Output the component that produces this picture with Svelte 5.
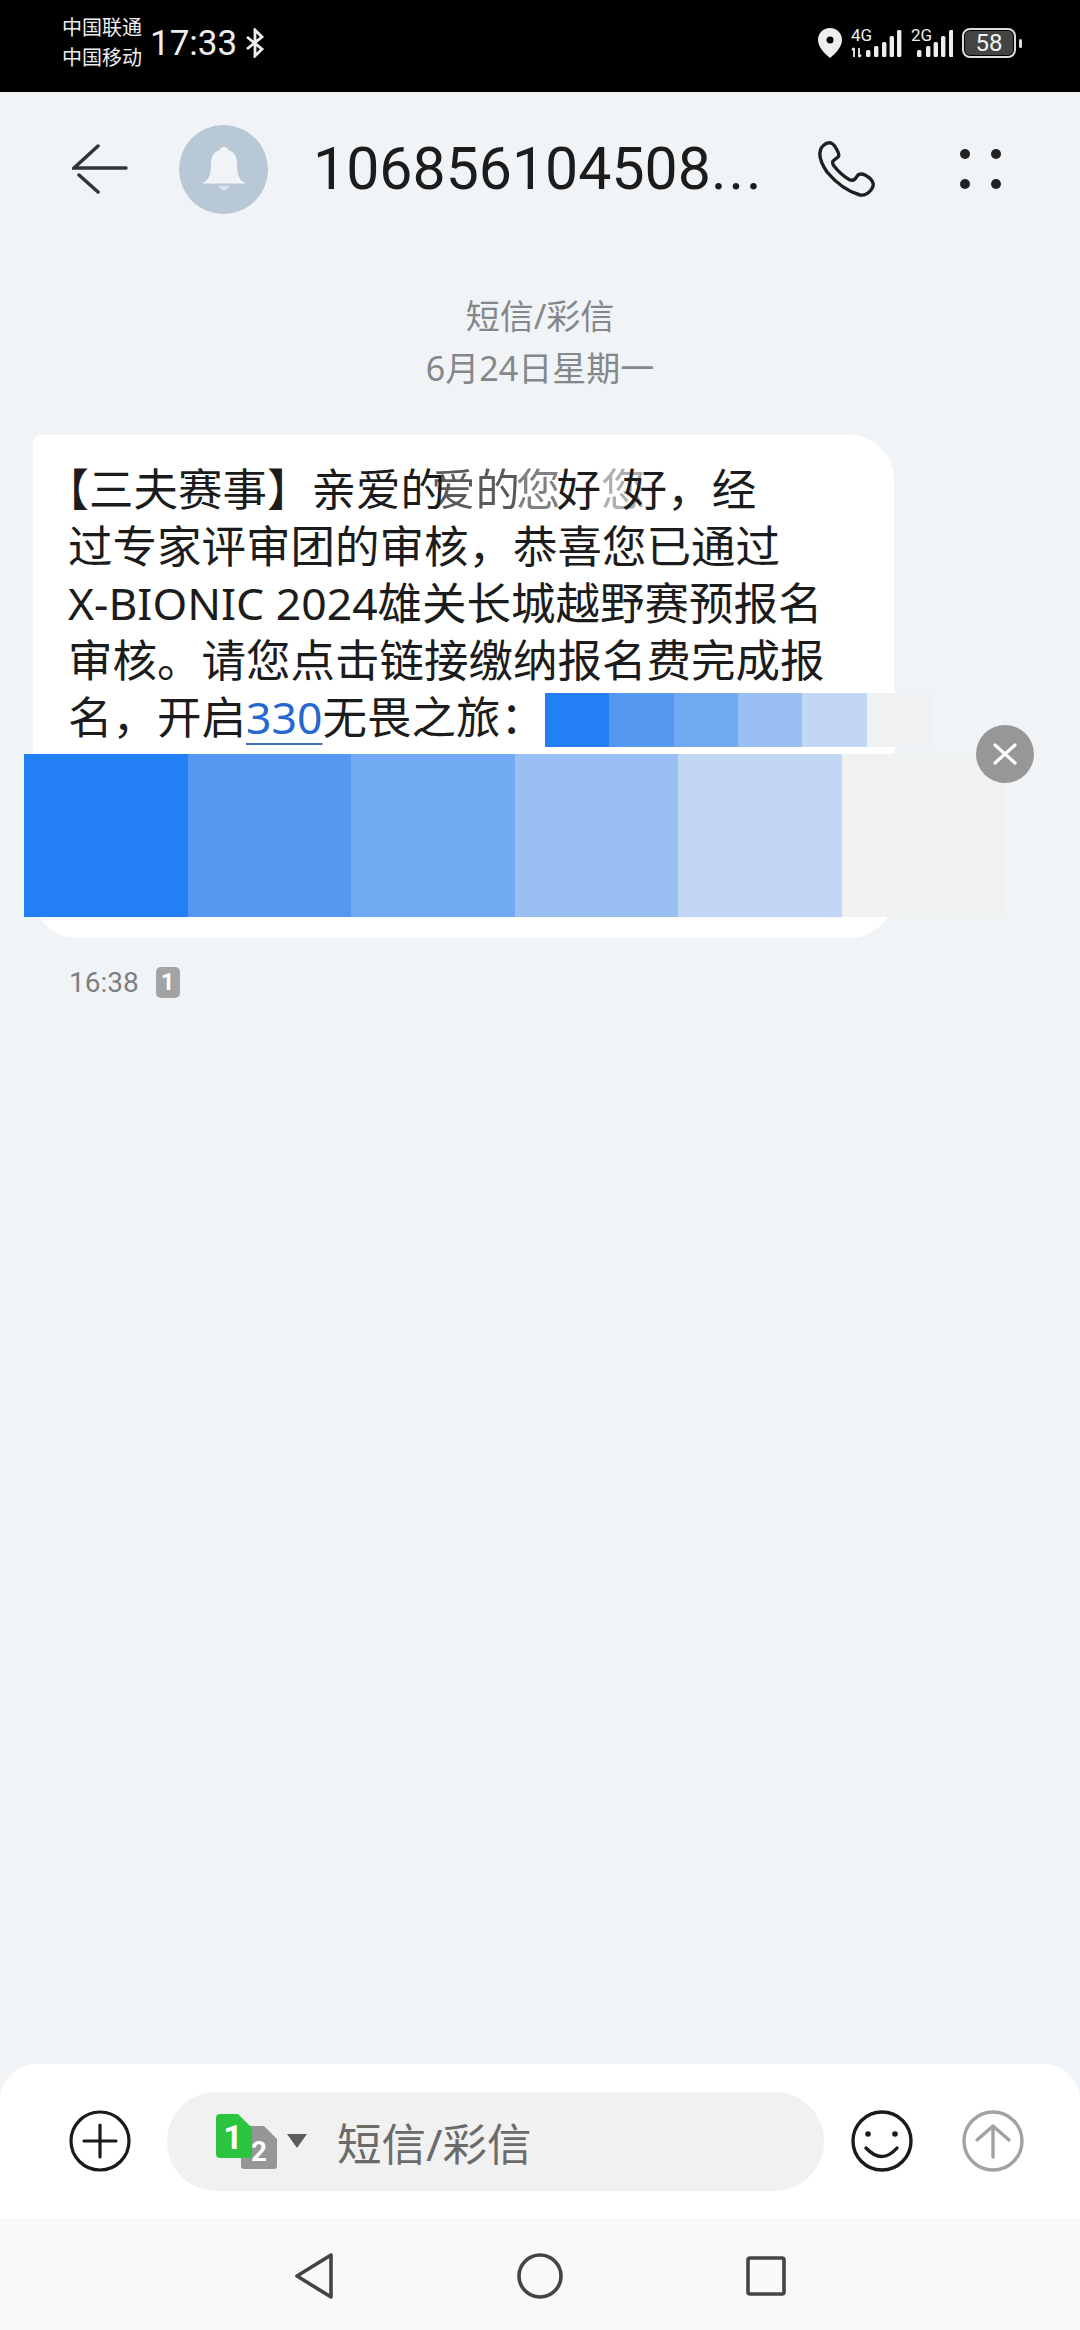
<script>
  // mosaic cells that hide the link in the message
  const cells = ["#237ff5", "#5598f2", "#72a9f3", "#9abff2", "#c2d7f3", "#f0f1f1"];

  const net1 = [
    { x: 15, top: 22 },
    { x: 23, top: 18 },
    { x: 31, top: 14 },
    { x: 38.6, top: 8 },
    { x: 46, top: 2 },
  ];
  const net2 = [
    { x: 6, top: 22 },
    { x: 15, top: 18 },
    { x: 22.6, top: 14 },
    { x: 30, top: 8 },
    { x: 38, top: 2 },
  ];
</script>

<div class="page">
  <div class="status">
    <div class="carriers">
      <span>中国联通</span>
      <span>中国移动</span>
    </div>
    <span class="clock">17:33</span>
    <svg class="bt" width="20" height="30" viewBox="0 0 20 30" fill="none" stroke="#eee" stroke-width="2.800">
      <path d="M2 9 L17 21 L10 28 L10 2 L17 9 L2 21" />
    </svg>

    <div class="status-right">
      <svg width="24" height="30" viewBox="0 0 24 30">
        <path fill-rule="evenodd" fill="#eee" d="M12 0 C5 0 0 5 0 12 C0 19 7 26 12 30 C17 26 24 19 24 12 C24 5 19 0 12 0 Z M12 8.500 A3.500 3.500 0 1 0 12.010 15.500 A3.500 3.500 0 1 0 12 8.500 Z" />
      </svg>
      <svg class="net" width="51" height="30" viewBox="0 0 51 30">
        <text x="0" y="13" class="net-label">4G</text>
        <path d="M3 29 V20 M1 22 L3 20 M8 29 V20 M8 29 L10 27" stroke="#eee" stroke-width="1.800" fill="none" />
        {#each net1 as b}
          <rect x={b.x} y={b.top} width="4.400" height={29 - b.top} rx="1.500" fill="#eee" />
        {/each}
      </svg>
      <svg class="net" width="42" height="30" viewBox="0 0 42 30">
        <text x="0" y="13" class="net-label">2G</text>
        {#each net2 as b}
          <rect x={b.x} y={b.top} width="4.400" height={29 - b.top} rx="1.500" fill="#eee" />
        {/each}
      </svg>
      <div class="battery">
        <div class="battery-body"><span>58</span></div>
        <div class="battery-tip"></div>
      </div>
    </div>
  </div>

  <div class="header">
    <svg class="back" width="56" height="50" viewBox="0 0 56 50" fill="none" stroke="#333" stroke-width="3.500" stroke-linecap="round">
      <path d="M26 2 L2 24 H54" />
      <path d="M7 31 L26 48" />
    </svg>
    <div class="avatar">
      <svg width="44" height="44" viewBox="0 0 44 44">
        <path fill="#f1f4f6" d="M22 0 C19 0 18 1.500 17.500 3 C11.500 5 9 10 9 17 C9 25 7.500 31 4 34 L1 35.500 L1 36.500 L43 36.500 L43 35.500 L40 34 C36.500 31 35 25 35 17 C35 10 32.500 5 26.500 3 C26 1.500 25 0 22 0 Z" />
        <path fill="#dbe4ea" d="M17 39 H27 A5 4 0 0 1 17 39 Z" />
      </svg>
    </div>
    <div class="title">106856104508<span class="dots">...</span></div>
    <svg class="call" width="57" height="56" viewBox="-1 -1 57 56" fill="none" stroke="#1f1f1f" stroke-width="3.400" stroke-linejoin="round">
      <path d="M5 3 Q8 0 12 1 Q15 2 18 8 Q21 13 19 15 L14 19 Q13 21 15 24 Q22 33 31 38 Q34 39 36 37 L39 33 Q42 31 46 33 Q53 37 54 41 Q55 44 52 48 Q47 54 41 53 Q23 48 8 30 Q0 18 1 11 Q1 6 5 3 Z" />
    </svg>
    <div class="menu">
      <i></i><i></i><i></i><i></i>
    </div>
  </div>

  <div class="thread">
    <div class="day">
      <div>短信/彩信</div>
      <div>6月24日星期一</div>
    </div>

    <div class="bubble">
      <div class="line first">
        <span class="hang">【</span>三夫赛事】亲爱的<span class="ghost g1">爱</span><span class="ghost g2">的</span><span class="ghost g3">您</span><span class="g4">好</span><span class="ghost g5">您</span><span class="g6">好</span>，经
      </div>
      <div class="line">过专家评审团的审核，恭喜您已通过</div>
      <div class="line">X-BIONIC 2024雄关长城越野赛预报名</div>
      <div class="line">审核。请您点击链接缴纳报名费完成报</div>
      <div class="line last">
        <span>名，开启<span class="link">330</span>无畏之旅：</span>
        <div class="mosaic small">
          {#each cells as c}
            <div style="background: {c}"></div>
          {/each}
        </div>
      </div>

      <div class="mosaic big">
        {#each cells as c}
          <div style="background: {c}"></div>
        {/each}
      </div>

      <div class="close">
        <svg width="26" height="26" viewBox="0 0 26 26" stroke="#fff" stroke-width="3.200" stroke-linecap="round">
          <path d="M3 4 L23 22 M23 4 L3 22" />
        </svg>
      </div>
    </div>

    <div class="meta">
      <span>16:38</span>
      <span class="sim-badge">1</span>
    </div>
  </div>

  <div class="composer">
    <svg class="tool" width="62" height="62" viewBox="0 0 62 62" fill="none" stroke="#1a1a1a" stroke-width="3.200" stroke-linecap="round">
      <circle cx="31" cy="31" r="29" />
      <path d="M15 31 H47 M31 15 V47" />
    </svg>
    <div class="input">
      <svg class="sim" width="61" height="55" viewBox="0 0 61 55">
        <path fill="#969696" d="M29 12 H48 L61 25 V52 A3 3 0 0 1 58 55 H28 A3 3 0 0 1 25 52 V15 A3 3 0 0 1 29 12 Z" />
        <text x="43" y="47" class="sim-two">2</text>
        <path fill="#2bc540" d="M4 0 H22 L36 14 V40 A4 4 0 0 1 32 44 H4 A4 4 0 0 1 0 40 V4 A4 4 0 0 1 4 0 Z" />
        <text x="17" y="35" class="sim-one">1</text>
      </svg>
      <span class="caret"></span>
      <span class="placeholder">短信/彩信</span>
    </div>
    <svg class="tool smile" width="62" height="62" viewBox="0 0 62 62" fill="none" stroke="#1a1a1a" stroke-width="3.400" stroke-linecap="round">
      <circle cx="31" cy="31" r="29" />
      <circle cx="17" cy="24" r="2.800" fill="#1a1a1a" stroke="none" />
      <circle cx="44" cy="24" r="2.800" fill="#1a1a1a" stroke="none" />
      <path d="M15 38 Q31 55 46 38" />
    </svg>
    <svg class="tool send" width="62" height="62" viewBox="0 0 62 62" fill="none" stroke="#a2a2a2" stroke-width="3.400" stroke-linecap="round" stroke-linejoin="round">
      <circle cx="31" cy="31" r="29" />
      <path d="M31 47 V16 M15 30 L31 16 L47 30" />
    </svg>
  </div>

  <div class="nav">
    <div class="nav-cell">
      <svg width="38" height="46" viewBox="0 0 38 46" fill="none" stroke="#444" stroke-width="3.600" stroke-linejoin="round">
        <path d="M2 23 L36 2 V44 Z" />
      </svg>
    </div>
    <div class="nav-cell">
      <svg width="46" height="46" viewBox="0 0 46 46" fill="none" stroke="#444" stroke-width="3.600">
        <circle cx="23" cy="23" r="21" />
      </svg>
    </div>
    <div class="nav-cell">
      <svg width="40" height="40" viewBox="0 0 40 40" fill="none" stroke="#444" stroke-width="3.600" stroke-linejoin="round">
        <rect x="2" y="2" width="36" height="36" rx="2" />
      </svg>
    </div>
  </div>
</div>

<style>
  :global(body) {
    margin: 0;
    background: #f1f4f6;
  }

  .page {
    width: 1080px;
    height: 2330px;
    display: flex;
    flex-direction: column;
    background: #f1f4f6;
    font-family: "Noto Sans", "Noto Sans CJK SC", sans-serif;
    color: #1a1a1a;
    overflow: hidden;
  }

  /* status bar */
  .status {
    height: 92px;
    box-sizing: border-box;
    padding: 0 58px 6px 62px;
    background: #000;
    color: #eee;
    display: flex;
    align-items: center;
    flex-shrink: 0;
  }

  .carriers {
    display: flex;
    flex-direction: column;
    font-size: 20px;
    line-height: 30px;
  }

  .clock {
    margin-left: 8px;
    font-family: Roboto, sans-serif;
    font-size: 35px;
  }

  .bt {
    margin-left: 8px;
  }

  .status-right {
    margin-left: auto;
    display: flex;
    align-items: center;
  }

  .net {
    margin-left: 9px;
  }

  .net-label {
    font-family: Roboto, sans-serif;
    font-size: 17px;
    fill: #eee;
  }

  .battery {
    margin-left: 9px;
    display: flex;
    align-items: center;
  }

  .battery-body {
    width: 54px;
    height: 30px;
    box-sizing: border-box;
    border: 2px solid #ddd;
    border-radius: 8px;
    padding: 1px;
    display: flex;
  }

  .battery-body span {
    flex: 1;
    background: #444;
    border-radius: 5px;
    font-family: Roboto, sans-serif;
    font-size: 24px;
    line-height: 24px;
    text-align: center;
    color: #f2f2f2;
  }

  .battery-tip {
    width: 3px;
    height: 9px;
    margin-left: 3px;
    background: #ddd;
    border-radius: 2px;
  }

  /* conversation header */
  .header {
    height: 154px;
    flex-shrink: 0;
    display: flex;
    align-items: center;
    padding-left: 72px;
  }

  .avatar {
    width: 89px;
    height: 89px;
    margin-left: 51px;
    border-radius: 50%;
    background: #b8c8d6;
    display: flex;
    align-items: center;
    justify-content: center;
  }

  .title {
    width: 505px;
    margin-left: 45px;
    font-family: Roboto, sans-serif;
    font-size: 59px;
    font-weight: 450;
    line-height: 70px;
    color: #1c1c1c;
    white-space: nowrap;
  }

  .dots {
    letter-spacing: 2px;
  }

  .menu {
    width: 41px;
    margin-left: 85px;
    display: grid;
    grid-template-columns: 10px 10px;
    justify-content: space-between;
    row-gap: 20px;
  }

  .menu i {
    width: 10px;
    height: 10px;
    border-radius: 50%;
    background: #222;
  }

  /* messages */
  .thread {
    flex: 1;
    padding-left: 33px;
  }

  .day {
    padding: 44px 33px 0 0;
    text-align: center;
    font-size: 34px;
    line-height: 52px;
    color: #85888a;
  }

  .bubble {
    position: relative;
    width: 861px;
    box-sizing: border-box;
    margin-top: 41px;
    padding: 25px 0 21px 35px;
    background: #fff;
    border-radius: 8px 44px 44px 44px;
  }

  .line {
    font-size: 44.500px;
    line-height: 57px;
    white-space: nowrap;
    color: #1c1c1c;
    text-spacing-trim: space-all;
  }

  .hang {
    margin-left: -23.500px;
  }

  .ghost {
    display: inline-block;
    opacity: 0.72;
    filter: blur(0.7px);
  }

  .g1 {
    margin-left: -14px;
  }

  .g3 {
    margin-left: -4px;
    opacity: 0.55;
  }

  .g4 {
    margin-left: -4px;
  }

  .g5 {
    opacity: 0.35;
  }

  .g6 {
    margin-left: -23px;
  }

  .last {
    display: flex;
    align-items: flex-start;
  }

  .link {
    color: #2468d0;
    text-decoration: underline;
    text-decoration-color: #3c6fb8;
    text-decoration-thickness: 2px;
    text-underline-offset: 9px;
  }

  .mosaic {
    display: flex;
  }

  .mosaic div {
    flex: 1;
  }

  .small {
    width: 386px;
    height: 54px;
    margin-top: 5px;
    flex-shrink: 0;
  }

  .big {
    width: 981px;
    height: 163px;
    margin: 7px 0 0 -44px;
  }

  .close {
    position: absolute;
    left: 943px;
    top: 290px;
    width: 58px;
    height: 58px;
    border-radius: 50%;
    background: #979797;
    display: flex;
    align-items: center;
    justify-content: center;
  }

  .meta {
    margin-top: 28px;
    padding-left: 36px;
    height: 32px;
    display: flex;
    align-items: center;
    gap: 17px;
    font-family: Roboto, sans-serif;
    font-size: 28px;
    color: #7d8082;
  }

  .sim-badge {
    width: 24px;
    height: 31px;
    border-radius: 5px;
    background: #a3a3a3;
    color: #fff;
    font-size: 24px;
    font-weight: 700;
    line-height: 31px;
    text-align: center;
  }

  /* bottom input */
  .composer {
    height: 154px;
    flex-shrink: 0;
    box-sizing: border-box;
    padding-left: 69px;
    background: #fff;
    border-radius: 36px 36px 0 0;
    display: flex;
    align-items: center;
  }

  .input {
    width: 657px;
    height: 99px;
    margin-left: 36px;
    box-sizing: border-box;
    padding-left: 49px;
    border-radius: 50px;
    background: #f1f1f1;
    display: flex;
    align-items: center;
  }

  .sim-one,
  .sim-two {
    font-family: Roboto, sans-serif;
    font-weight: 700;
    fill: #fff;
    text-anchor: middle;
  }

  .sim-one {
    font-size: 34px;
  }

  .sim-two {
    font-size: 28px;
  }

  .caret {
    width: 0;
    height: 0;
    margin-left: 10px;
    border-left: 10px solid transparent;
    border-right: 10px solid transparent;
    border-top: 14px solid #5c5c5c;
  }

  .placeholder {
    margin-left: 30px;
    font-size: 44.500px;
    color: #6b6b6b;
  }

  .smile {
    margin-left: 27px;
  }

  .send {
    margin-left: 49px;
  }

  /* system nav */
  .nav {
    height: 112px;
    box-sizing: border-box;
    padding-top: 4px;
    flex-shrink: 0;
    background: #f8f9f9;
    display: flex;
    justify-content: center;
    align-items: center;
  }

  .nav-cell {
    width: 226px;
    display: flex;
    justify-content: center;
    align-items: center;
  }
</style>
